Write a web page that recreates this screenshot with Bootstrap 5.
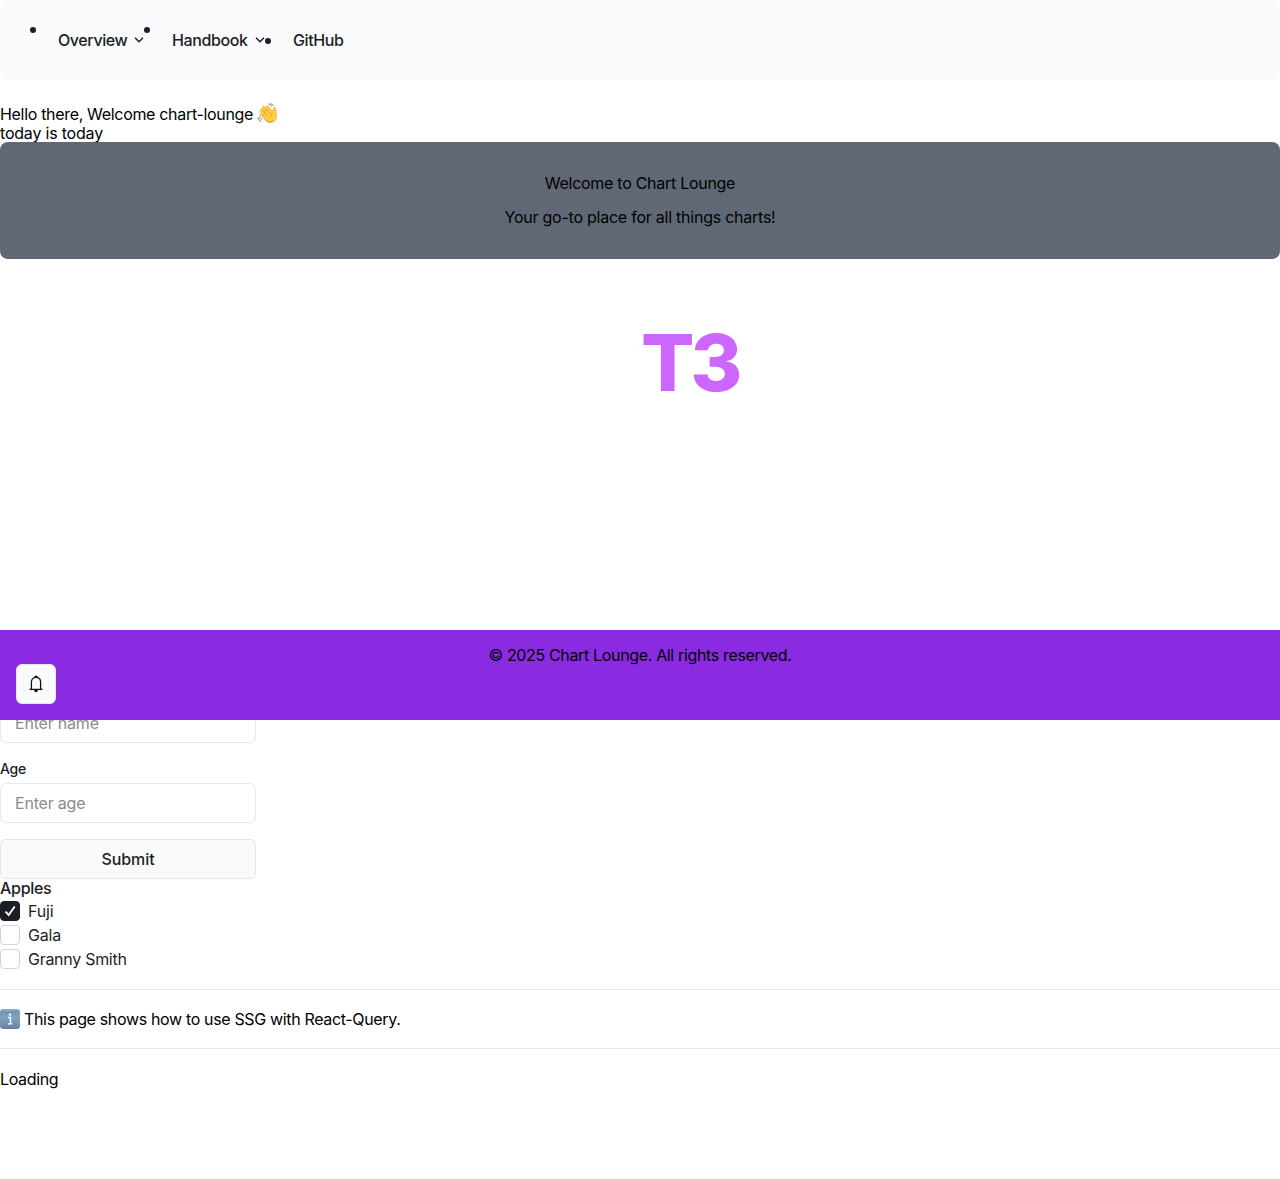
<!DOCTYPE html>
<html lang="en">
<head>
<meta charset="utf-8">
<meta name="viewport" content="width=device-width, initial-scale=1">
<title>Chart Lounge</title>
<link href="https://cdn.jsdelivr.net/npm/bootstrap@5.3.0/dist/css/bootstrap.min.css" rel="stylesheet">
<style>
body{font-family:Inter,"Liberation Sans",sans-serif;font-size:16px;line-height:19px;color:#000;letter-spacing:-.2px;height:1179px;overflow:hidden}
.ink{color:#1c1e26}
.topbar{height:80px;background:#f9fafc;border-radius:8px;padding:20px 16px 20px 42px}
.topbar li{position:relative;height:40px;padding-left:16px;font-weight:550;letter-spacing:-.4px;white-space:nowrap}
.topbar li::before{content:"";position:absolute;left:-12px;top:7px;width:6px;height:6px;border-radius:50%;background:#1c1e26}
.topbar li.plain::before{top:18px}
.topbar svg{margin-right:12px}
.item-a{width:114px}.item-b{width:121px}
.greeting{padding-top:24px;height:62px}
.greeting-line{height:20px}
.greeting svg{margin-left:4px;margin-top:-1px}
.t1{letter-spacing:-.32px}.t3,.t5{letter-spacing:-.28px}.t4{letter-spacing:-.24px}.t6,.t8{letter-spacing:-.345px}
.hero{height:117px;background:#616875;border-radius:8px;padding-top:32px;gap:15px}
.brand{height:371px;padding:63px 0 0 641px;font-size:79px;font-weight:850;line-height:80px;letter-spacing:-4px;color:#cc66ff}
.page-footer{top:630px;height:90px;background:#8a2be2;padding-top:16px;z-index:5}
.bell{left:16px;top:34px;width:40px;height:40px;background:#f9fafc;border:1px solid #e3e5e9;border-radius:6px;padding:0}
.fields{width:256px;padding-top:73px}
.fields .form-control{height:40px;border:1px solid #e8e8ea;border-radius:6px;padding:0 14px;font-size:16px;letter-spacing:inherit}
.fields .form-control::placeholder{color:#8b8b8b;opacity:1}
.fields label{font-size:14px;line-height:20px;font-weight:550;margin:16px 0 4px;letter-spacing:-.3px}
.send{height:40px;margin-top:16px;background:#f9fafc;border:1px solid #e3e5e9;border-radius:6px;padding:0;font-weight:550;letter-spacing:-.05px}
.group-title{font-weight:550;height:22px;letter-spacing:-.3px}
.choices{gap:4px}
.choices label{height:20px;gap:8px}
.choices .form-check-input{width:20px;height:20px;margin:0;border:1px solid #d3d3d5;border-radius:4px}
.choices .form-check-input:checked{background:#1c1e26;border-color:#1c1e26;background-image:none}
.tick{position:absolute;left:0;top:0}
.rule{border:0;border-top:1px solid #e8e8e8;opacity:1;margin:0}
.rule-first{margin-top:20px}
.info{height:58px;gap:4px}
.status{padding-top:21px;letter-spacing:-.36px}
</style>
</head>
<body>
<header class="topbar"><ul class="list-unstyled d-flex m-0 ink">
<li class="item-a d-flex align-items-center"><span>Overview</span><svg class="ms-auto" width="10" height="6" viewBox="0 0 10 6" fill="none" stroke="#1c1e26" stroke-width="1.4"><path d="M1 .8l4 4 4-4"/></svg></li>
<li class="item-b d-flex align-items-center"><span>Handbook</span><svg class="ms-auto" width="10" height="6" viewBox="0 0 10 6" fill="none" stroke="#1c1e26" stroke-width="1.4"><path d="M1 .8l4 4 4-4"/></svg></li>
<li class="plain d-flex align-items-center"><span>GitHub</span></li>
</ul></header>
<main>
<div class="greeting"><div class="greeting-line d-flex align-items-center"><span class="t1">Hello there, Welcome chart-lounge</span>
<svg width="21" height="21" viewBox="0 0 21 21"><path d="M4 6.5Q4.300 5 5.600 5.800L9 9 5.500 4.300Q5.500 2.700 7.100 3.100L11.600 7.800 9.300 3.600Q9.800 2.100 11.200 3L15.800 8.300Q16.500 6 16.800 4.400 18.500 3.800 18.800 6L19.500 12Q20 17 16 19 12 21 8.500 17.500L3.300 12Q2.600 10.500 4.300 10.600L7.500 13 2.900 8.300Q2.700 7 4 6.500Z" fill="#ffcb45" stroke="#eba72c" stroke-width=".6"/><path d="M5 7l5.500 5.500M7.500 5l5.500 5.500M15.500 9q-2 2-.8 4.500M9 17q4 4 8.500.5" fill="none" stroke="#e59a24" stroke-width=".8"/><path d="M11.500 .9q2.300.4 3.300 2.500M13.800.5q1.700.5 2.600 2.300M.8 14.500q.5 2.800 3.400 4.200M2.400 13.500q.4 2 2.600 3.200" fill="none" stroke="#777" stroke-width="1"/></svg></div>
<div>today is today</div></div>
<section class="hero d-flex flex-column align-items-center"><div class="t3">Welcome to Chart Lounge</div><div class="t4">Your go-to place for all things charts!</div></section>
<div class="brand">T3</div>
<form class="fields"><input class="form-control" type="text" placeholder="Enter name" aria-label="Name">
<label class="d-block ink" for="age">Age</label><input class="form-control" id="age" type="text" placeholder="Enter age">
<button class="btn send w-100 ink" type="button">Submit</button></form>
<div class="group-title ink">Apples</div>
<div class="choices d-flex flex-column ink">
<label class="d-flex align-items-center position-relative"><input class="form-check-input" type="checkbox" checked><svg class="tick" width="20" height="20" fill="none" stroke="#fff" stroke-width="1.9"><path d="M5.500 10.700l3.200 3.300 6-8.500"/></svg><span>Fuji</span></label>
<label class="d-flex align-items-center"><input class="form-check-input" type="checkbox"><span>Gala</span></label>
<label class="d-flex align-items-center"><input class="form-check-input" type="checkbox"><span class="t5">Granny Smith</span></label>
</div>
<hr class="rule rule-first">
<div class="info d-flex align-items-center"><svg width="20" height="20"><defs><linearGradient id="tile" x2="0" y2="1"><stop stop-color="#6f8fae"/><stop offset=".45" stop-color="#7fa3c4"/><stop offset="1" stop-color="#63809d"/></linearGradient></defs><rect width="20" height="20" rx="3.500" fill="url(#tile)"/><path d="M2.500 1h15" stroke="#a8bfd4"/><circle cx="10" cy="5.600" r="1.200" fill="#fff"/><path d="M8 8.500h2.500v6M7.800 14.800h4.600" fill="none" stroke="#fff" stroke-width="1.300"/></svg><span class="t6">This page shows how to use SSG with React-Query.</span></div>
<hr class="rule">
<div class="status">Loading</div>
</main>
<footer class="page-footer position-absolute start-0 w-100 text-center"><span class="t8">© 2025 Chart Lounge. All rights reserved.</span>
<button class="bell btn position-absolute d-flex align-items-center justify-content-center" type="button" aria-label="Notifications"><svg width="14" height="18" viewBox="0 0 14 18" fill="none" stroke="#111319" stroke-width="1.300"><path d="M.5 14.400h13M2.400 14V7.200C2.400 4.200 4.200 2.300 7 2.300s4.600 1.900 4.600 4.900V14"/><path d="M5.900 2.200a1.100 1.100 0 0 1 2.200 0zM5.900 15.500a1.100 1.100 0 0 0 2.200 0z" fill="#111319"/></svg></button></footer>
<script src="https://cdn.jsdelivr.net/npm/bootstrap@5.3.0/dist/js/bootstrap.bundle.min.js"></script>
</body>
</html>
